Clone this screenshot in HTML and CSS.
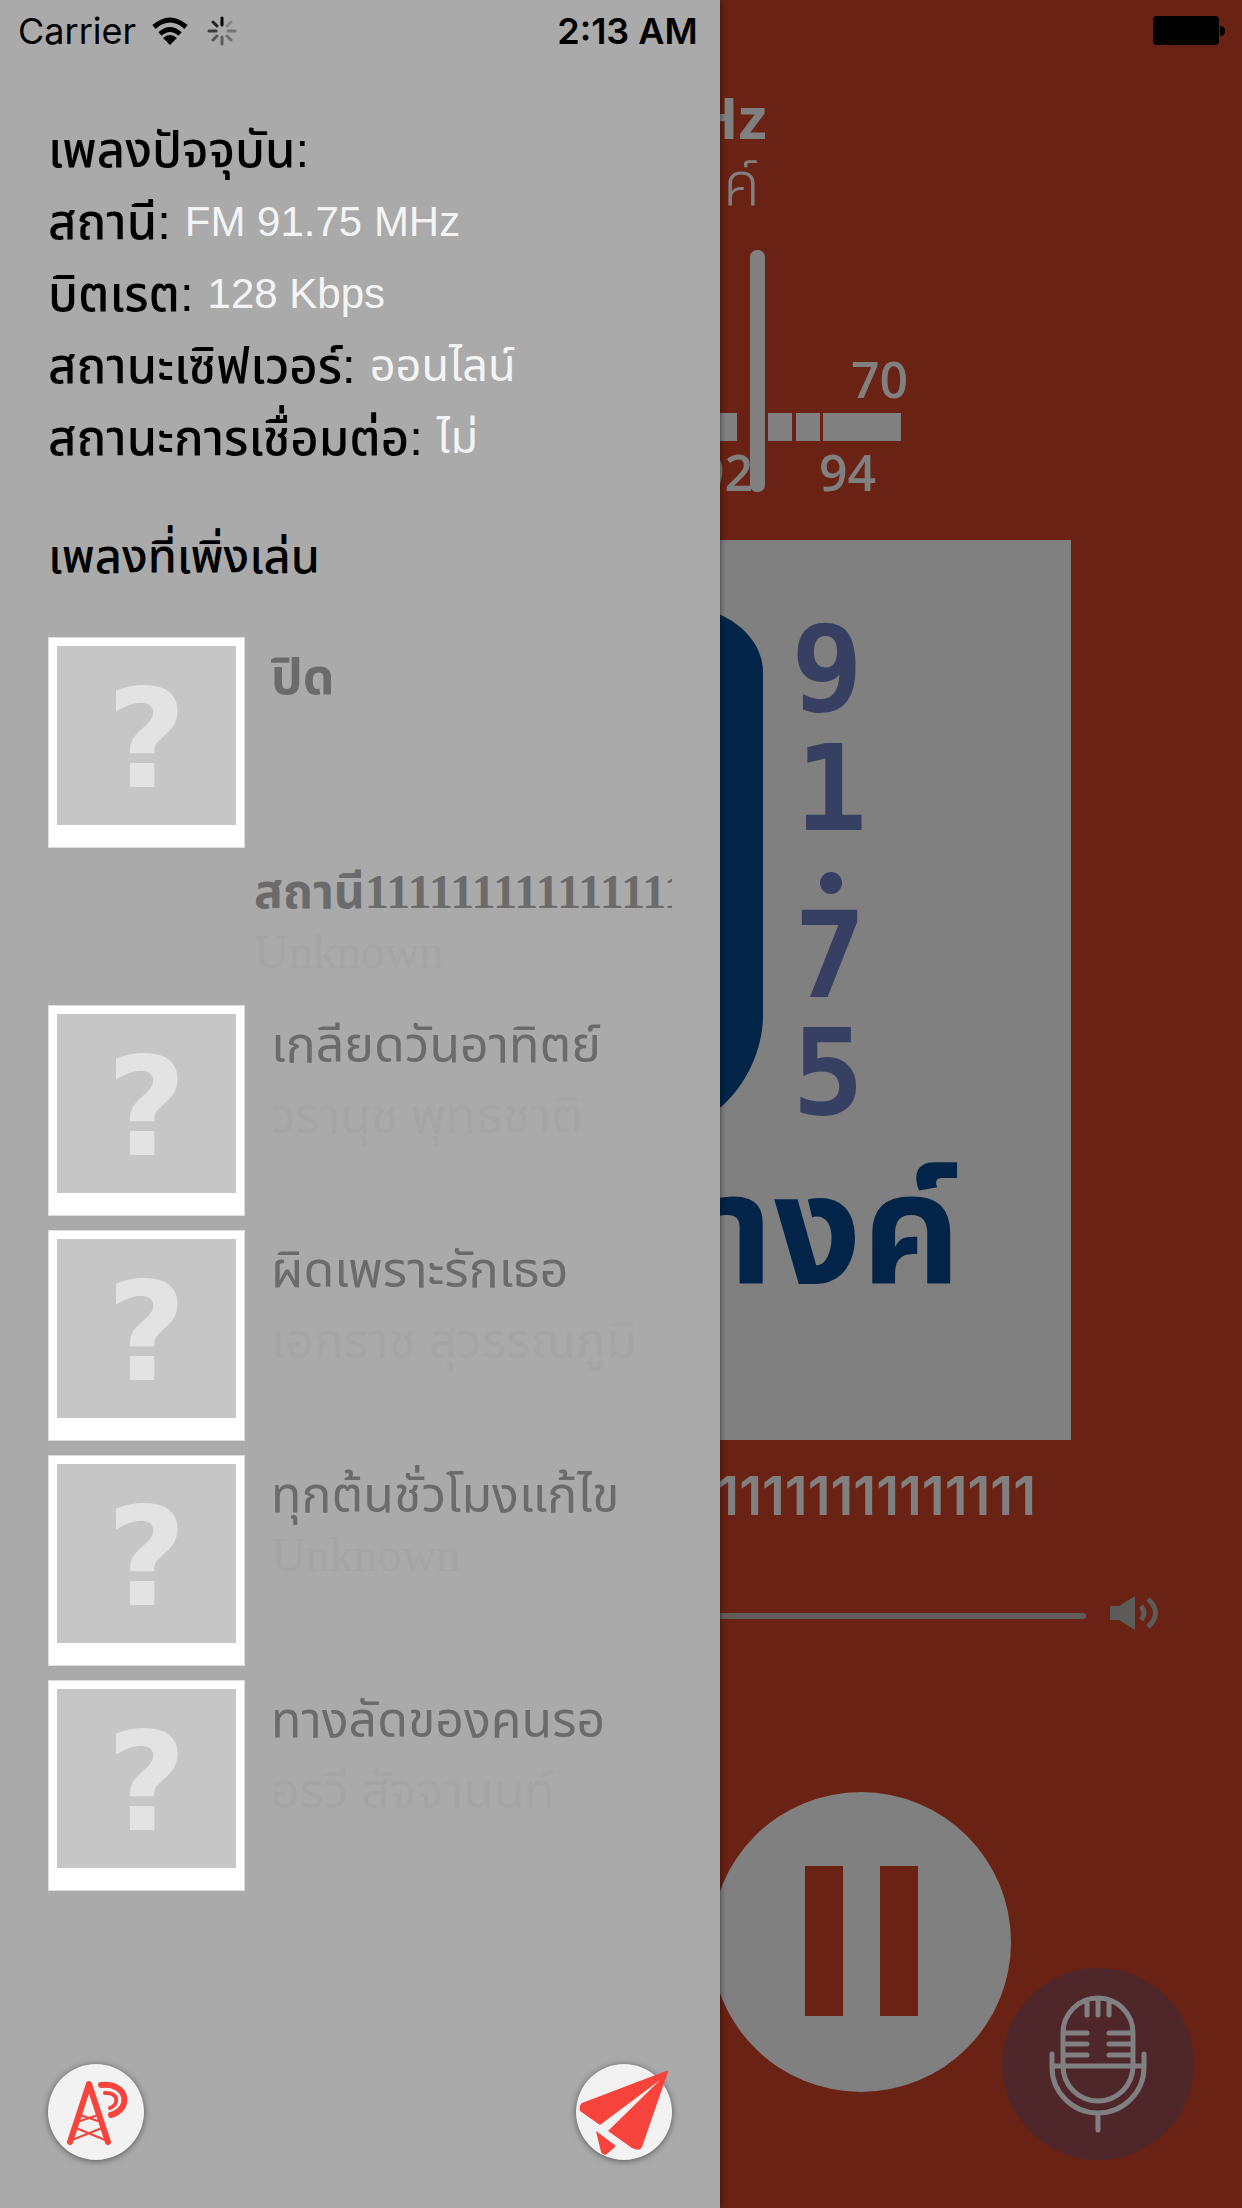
FILE: index.html
```html
<!DOCTYPE html>
<html lang="th">
<head>
<meta charset="utf-8">
<meta name="viewport" content="width=device-width, initial-scale=1">
<title>FM 91.75 MHz</title>
<link rel="stylesheet" href="styles.css">
</head>
<body>
<div class="app">
  <main class="player">
    <header class="station">
      <h1 class="station-freq">91.75 MHz</h1>
      <p class="station-name">สถานีณางค์</p>
    </header>
    <svg class="dial" viewBox="0 0 560 250" role="img" aria-label="FM 92">
      <g fill="#808080">
        <rect x="0" y="166" width="396" height="28"/>
        <rect x="427" y="166" width="24" height="28"/>
        <rect x="455" y="166" width="24" height="28"/>
        <rect x="482" y="166" width="78" height="28"/>
        <text class="dial-num" x="510" y="151">70</text>
        <text class="dial-num" x="355" y="244">92</text>
        <text class="dial-num" x="478" y="244">94</text>
        <rect x="409" y="3" width="15" height="242" rx="7"/>
      </g>
    </svg>
    <svg class="cover" viewBox="0 0 900 900" role="img" aria-label="91.75">
      <rect width="900" height="900" fill="#808080"/>
      <path d="M200 68H528C568 76 592 104 592 132V475C592 510 575 545 550 567H200Z" fill="#012448"/>
      <g class="cover-freq" fill="#374062" text-anchor="middle">
        <text x="656" y="171">9</text>
        <text x="660" y="290">1</text>
        <circle cx="660" cy="343" r="11"/>
        <text x="659" y="457">7</text>
        <text x="657" y="574">5</text>
      </g>
      <text class="cover-name" x="790" y="744" text-anchor="end" fill="#012448">างค์</text>
    </svg>
    <p class="now">11111111111111</p>
    <div class="volume">
      <input class="volume-range" type="range" min="0" max="100" value="40" aria-label="ระดับเสียง">
      <svg class="volume-icon" viewBox="0 0 50 34" aria-hidden="true">
        <path d="M0 10H9L25 0V34L9 24H0Z" fill="#5d5b59"/>
        <path d="M31 10Q37 17 31 24M38 3Q53 17 38 31" fill="none" stroke="#5d5b59" stroke-width="5"/>
      </svg>
    </div>
    <div class="controls">
      <button class="pause" type="button" aria-label="หยุดชั่วคราว">
        <svg viewBox="0 0 300 300" aria-hidden="true"><path d="M94 74h38v150h-38zM169 74h38v150h-38z" fill="#6a2214"/></svg>
      </button>
    </div>
    <button class="mic" type="button" aria-label="ไมโครโฟน">
      <svg viewBox="0 0 192 192" fill="none" stroke="#808080" stroke-width="5" stroke-linecap="round" aria-hidden="true">
        <path d="M61 98V65a35 35 0 0 1 70 0V98a35 35 0 0 1-70 0ZM50 86V99a46 46 0 0 0 92 0V86M50 98H142M96 146V162M85 33V47M96 32V47M107 33V47M63 65H85M63 76H85M63 87H85M107 65H129M107 76H129M107 87H129"/>
      </svg>
    </button>
  </main>

  <aside class="drawer">
    <dl class="info">
      <div class="info-row"><dt>เพลงปัจจุบัน:</dt><dd></dd></div>
      <div class="info-row"><dt>สถานี:</dt><dd lang="en">FM 91.75 MHz</dd></div>
      <div class="info-row"><dt>บิตเรต:</dt><dd lang="en">128 Kbps</dd></div>
      <div class="info-row"><dt>สถานะเซิฟเวอร์:</dt><dd>ออนไลน์</dd></div>
      <div class="info-row"><dt>สถานะการเชื่อมต่อ:</dt><dd>ไม่</dd></div>
    </dl>
    <h2 class="recent-title">เพลงที่เพิ่งเล่น</h2>
    <ul class="tracks">
      <li class="track">
        <span class="thumb"><span class="thumb-art">?</span></span>
        <div class="track-text"><p class="track-name strong">ปิด</p></div>
      </li>
      <li class="track bare">
        <div class="track-text"><p class="track-name strong">สถานี11111111111111111</p><p class="track-artist" lang="en">Unknown</p></div>
      </li>
      <li class="track">
        <span class="thumb"><span class="thumb-art">?</span></span>
        <div class="track-text"><p class="track-name">เกลียดวันอาทิตย์</p><p class="track-artist">วรานุช พุทธชาติ</p></div>
      </li>
      <li class="track">
        <span class="thumb"><span class="thumb-art">?</span></span>
        <div class="track-text"><p class="track-name">ผิดเพราะรักเธอ</p><p class="track-artist">เอกราช สุวรรณภูมิ</p></div>
      </li>
      <li class="track">
        <span class="thumb"><span class="thumb-art">?</span></span>
        <div class="track-text"><p class="track-name">ทุกต้นชั่วโมงแก้ไข</p><p class="track-artist" lang="en">Unknown</p></div>
      </li>
      <li class="track">
        <span class="thumb"><span class="thumb-art">?</span></span>
        <div class="track-text"><p class="track-name">ทางลัดของคนรอ</p><p class="track-artist">อรวี สัจจานนท์</p></div>
      </li>
    </ul>
    <div class="drawer-actions">
      <button class="round" type="button" aria-label="สถานีวิทยุ">
        <svg viewBox="0 0 96 96" fill="none" stroke="#f6443d" stroke-linecap="round" stroke-linejoin="round" aria-hidden="true">
          <path d="M22 78L41 20L60 78" stroke-width="6"/>
          <path d="M32 51L50 57M50 51L32 57M28 64L57 76M54 64L24 76" stroke-width="2"/>
          <path d="M53 21C80 18 84 45 63 51" stroke-width="6"/>
          <path d="M57 29C70 28 72 40 62 44" stroke-width="4"/>
        </svg>
      </button>
      <button class="round" type="button" aria-label="ส่งข้อความ">
        <svg viewBox="0 0 96 96" fill="#f6443d" aria-hidden="true">
          <path d="M92 8Q93 6 90 7L6 39Q3 41 4 47L24 61L84 16L32 67L56 84Q64 88 66 83L92 8ZM20 67L25 88Q27 92 31 90L40 82Z"/>
        </svg>
      </button>
    </div>
  </aside>

  <div class="status">
    <div class="status-left">
      <span class="carrier">Carrier</span>
      <svg class="wifi" viewBox="0 0 36 28" aria-hidden="true">
        <path d="M2 10Q18-4 34 10M8 17Q18 8 28 17" fill="none" stroke="#000" stroke-width="5"/>
        <path d="M18 28L11 21Q18 15 25 21Z"/>
      </svg>
      <svg class="spinner" viewBox="0 0 30 30" stroke="#000" stroke-width="3" stroke-linecap="round" aria-hidden="true">
        <path d="M15 2V9"/><path d="M6 6L10 10" opacity=".8"/><path d="M2 15H9" opacity=".65"/><path d="M6 24L10 20" opacity=".5"/>
        <path d="M15 21V28" opacity=".45"/><path d="M20 20L24 24" opacity=".35"/><path d="M21 15H28" opacity=".3"/><path d="M20 10L24 6" opacity=".2"/>
      </svg>
    </div>
    <time class="clock">2:13 AM</time>
    <svg class="battery" viewBox="0 0 72 30" aria-hidden="true">
      <rect width="66" height="29" rx="4"/><path d="M67 10Q72 10 72 15T67 20Z"/>
    </svg>
  </div>
</div>
</body>
</html>
```
FILE: styles.css
```css
* { box-sizing: border-box; }
body { margin: 0; background: #6a2214; font-family: "Liberation Sans", "Noto Sans Thai", sans-serif; }
h1, h2, p, dl, dd, ul { margin: 0; padding: 0; }
ul { list-style: none; }
button { padding: 0; border: 0; border-radius: 50%; }
svg { display: block; }

.app { position: relative; min-height: 100vh; overflow: hidden; display: flex; }

/* Status bar, over both the player and the drawer */
.status {
  position: absolute; inset: 0 0 auto 0; height: 62px; padding: 0 17px 0 18px;
  display: grid; grid-template-columns: minmax(0, 1fr) auto minmax(0, 1fr); align-items: center;
  font-family: Inter, sans-serif; font-size: 36px; color: #000;
}
.status-left { display: flex; align-items: center; gap: 16px; }
.clock { font-weight: 600; padding-left: 12px; }
.wifi { width: 36px; }
.spinner { width: 30px; margin-left: 3px; }
.battery { width: 72px; justify-self: end; }

/* Player */
.player {
  flex: 1; min-width: 0; display: flex; flex-direction: column; align-items: center;
  padding-top: 82px; color: #808080; position: relative;
}
.station { text-align: center; }
.station-freq { font: 700 58px/70px "Open Sans", sans-serif; }
.station-name { font-size: 60px; line-height: 66px; font-weight: 300; }
.dial { width: 560px; margin-top: 29px; overflow: visible; }
.dial-num { font: 600 50px "Open Sans", sans-serif; }
.cover { width: 900px; max-width: 100%; margin-top: 43px; }
.cover-freq { font: 700 120px "DejaVu Sans Mono", monospace; }
.cover-name { font: 700 154px "Noto Sans Thai", sans-serif; }
.now { width: 830px; max-width: 100%; margin-top: 20px; font: 600 54px/72px Inter, sans-serif; text-align: right; }
.volume { width: 1077px; max-width: 100%; display: flex; align-items: center; gap: 24px; margin-top: 64px; }
.volume-range { flex: 1; height: 34px; margin: 0; padding-top: 6px; appearance: none; background: none; }
.volume-range::-webkit-slider-runnable-track { height: 6px; border-radius: 3px; background: #605c5b; }
.volume-range::-webkit-slider-thumb { appearance: none; width: 40px; height: 40px; margin-top: -17px; border-radius: 50%; background: #808080; }
.volume-icon { width: 50px; }
.controls { width: 100%; display: flex; justify-content: center; margin-top: 162px; padding-left: 480px; }
.pause { width: 300px; height: 300px; background: #808080; }
.mic { position: absolute; right: 48px; bottom: 48px; width: 192px; height: 192px; background: #4f272b; }

/* Drawer */
.drawer {
  position: absolute; inset: 0 auto 0 0; width: 58%; padding: 114px 48px 48px;
  display: flex; flex-direction: column; background: #aaa; box-shadow: 0 0 6px rgba(0, 0, 0, .6);
}
.info-row { display: flex; gap: 14px; height: 72px; line-height: 72px; white-space: nowrap; }
.info dt { font-size: 49px; font-weight: 500; color: #000; }
.info dd { font-size: 45px; color: #f4f4f4; }
.info dd:lang(en) { font-size: 42px; }
.recent-title { margin-top: 47px; font-size: 47px; line-height: 72px; height: 73px; font-weight: 500; color: #000; }
.tracks { margin-top: 43px; display: grid; grid-template-columns: minmax(0, 1fr); gap: 14px; }
.track { display: flex; gap: 26px; height: 211px; }
.track.bare { height: 129px; padding-left: 206px; }
.thumb { flex: none; width: 197px; padding: 8px 8px 23px; background: #fff; border: 1px solid #ddd; }
.thumb-art {
  display: flex; justify-content: center; align-items: center; height: 179px; padding-top: 8px; background: #c6c6c6;
  color: #e3e3e3; font: 700 138px "DejaVu Sans", sans-serif;
}
.track-text { flex: 1; min-width: 0; padding-top: 10px; font-family: "Liberation Serif", "Noto Sans Thai", serif; font-size: 50px; line-height: 60px; }
.bare .track-text { padding-top: 0; font-size: 48px; }
.track-name { height: 60px; color: #6b6b6b; white-space: nowrap; overflow: hidden; }
.strong { font-weight: 700; }
.track-artist { height: 60px; color: #a5a5a5; white-space: nowrap; }
.track-artist:lang(th) { margin-top: 11px; }
.track-artist:lang(en) { font-size: 48px; }
.drawer-actions { margin-top: auto; display: flex; justify-content: space-between; }
.round { width: 96px; height: 96px; background: #f2f2f2; box-shadow: 0 1px 6px rgba(0, 0, 0, .5); }
```
